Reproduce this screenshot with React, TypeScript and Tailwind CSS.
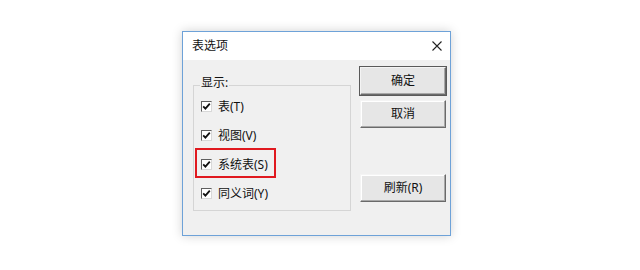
import React from 'react';

const font = 'font-["Noto_Sans","Noto_Sans_CJK_SC",sans-serif]';

const CheckBox = () => (
  <span className="flex h-[11px] w-[11px] items-center justify-center border border-t-[#5f5f5f] border-l-[#5f5f5f] border-b-[#d8d8d8] border-r-[#d8d8d8] bg-white">
    <svg width="9" height="9" viewBox="0 0 9 9">
      <path d="M1.2 4.4 L3.4 6.7 L7.8 1.6" fill="none" stroke="#111" strokeWidth="1.8" />
    </svg>
  </span>
);

const Row = ({ label, marked }: { label: string; marked?: boolean }) => (
  <div className="relative flex h-[29px] items-center gap-[6px] pl-[7px]">
    <CheckBox />
    <span className="text-[12px] leading-[14px] text-[#111]">{label}</span>
    {marked && (
      <span className="absolute left-[1px] top-[-2px] h-[30px] w-[81px] border-2 border-[#e0191f]" />
    )}
  </div>
);

const Btn = ({ label, primary }: { label: string; primary?: boolean }) => (
  <button
    className={`flex h-[28px] w-[86px] items-center justify-center bg-[#e6e6e6] text-[12px] leading-[14px] text-[#111] border border-t-[#f4f4f4] border-l-[#f4f4f4] border-b-[#6a6a6a] border-r-[#6a6a6a] ${
      primary
        ? 'shadow-[0_0_0_1px_#5a5a5a,inset_-1px_-1px_0_#a8a8a8]'
        : 'shadow-[inset_-1px_-1px_0_#a8a8a8,inset_1px_1px_0_#ffffff]'
    }`}
  >
    {label}
  </button>
);

const App: React.FC = () => {
  return (
    <div className={`h-[270px] w-[640px] bg-white pl-[182px] pt-[31px] ${font}`}>
      <div className="flex h-[205px] w-[269px] flex-col border border-[#6ea2d8] bg-[#f0f0f0] shadow-[0_0_10px_rgba(0,0,0,0.18)]">
        <div className="flex h-[28px] items-center justify-between bg-white pl-[9px] pr-[8px]">
          <span className="text-[12px] leading-[14px] text-[#111]">表选项</span>
          <svg width="10" height="10" viewBox="0 0 10 10">
            <path d="M0.5 0.5 L9.5 9.5 M9.5 0.5 L0.5 9.5" stroke="#222" strokeWidth="1.1" />
          </svg>
        </div>
        <div className="flex pl-[10px] pr-[4px] pt-[7px]">
          <div className="pt-[18px]">
            <div className="relative h-[126px] w-[158px] border border-[#d5d5d5] pt-[6px]">
              <span className="absolute left-[6px] top-[-10px] bg-[#f0f0f0] px-[1px] text-[12px] leading-[14px] text-[#111]">
                显示:
              </span>
              <Row label="表(T)" />
              <Row label="视图(V)" />
              <Row label="系统表(S)" marked />
              <Row label="同义词(Y)" />
            </div>
          </div>
          <div className="ml-[9px] flex flex-col">
            <Btn label="确定" primary />
            <div className="mt-[5px]">
              <Btn label="取消" />
            </div>
            <div className="mt-[46px]">
              <Btn label="刷新(R)" />
            </div>
          </div>
        </div>
      </div>
    </div>
  );
};

export default App;
